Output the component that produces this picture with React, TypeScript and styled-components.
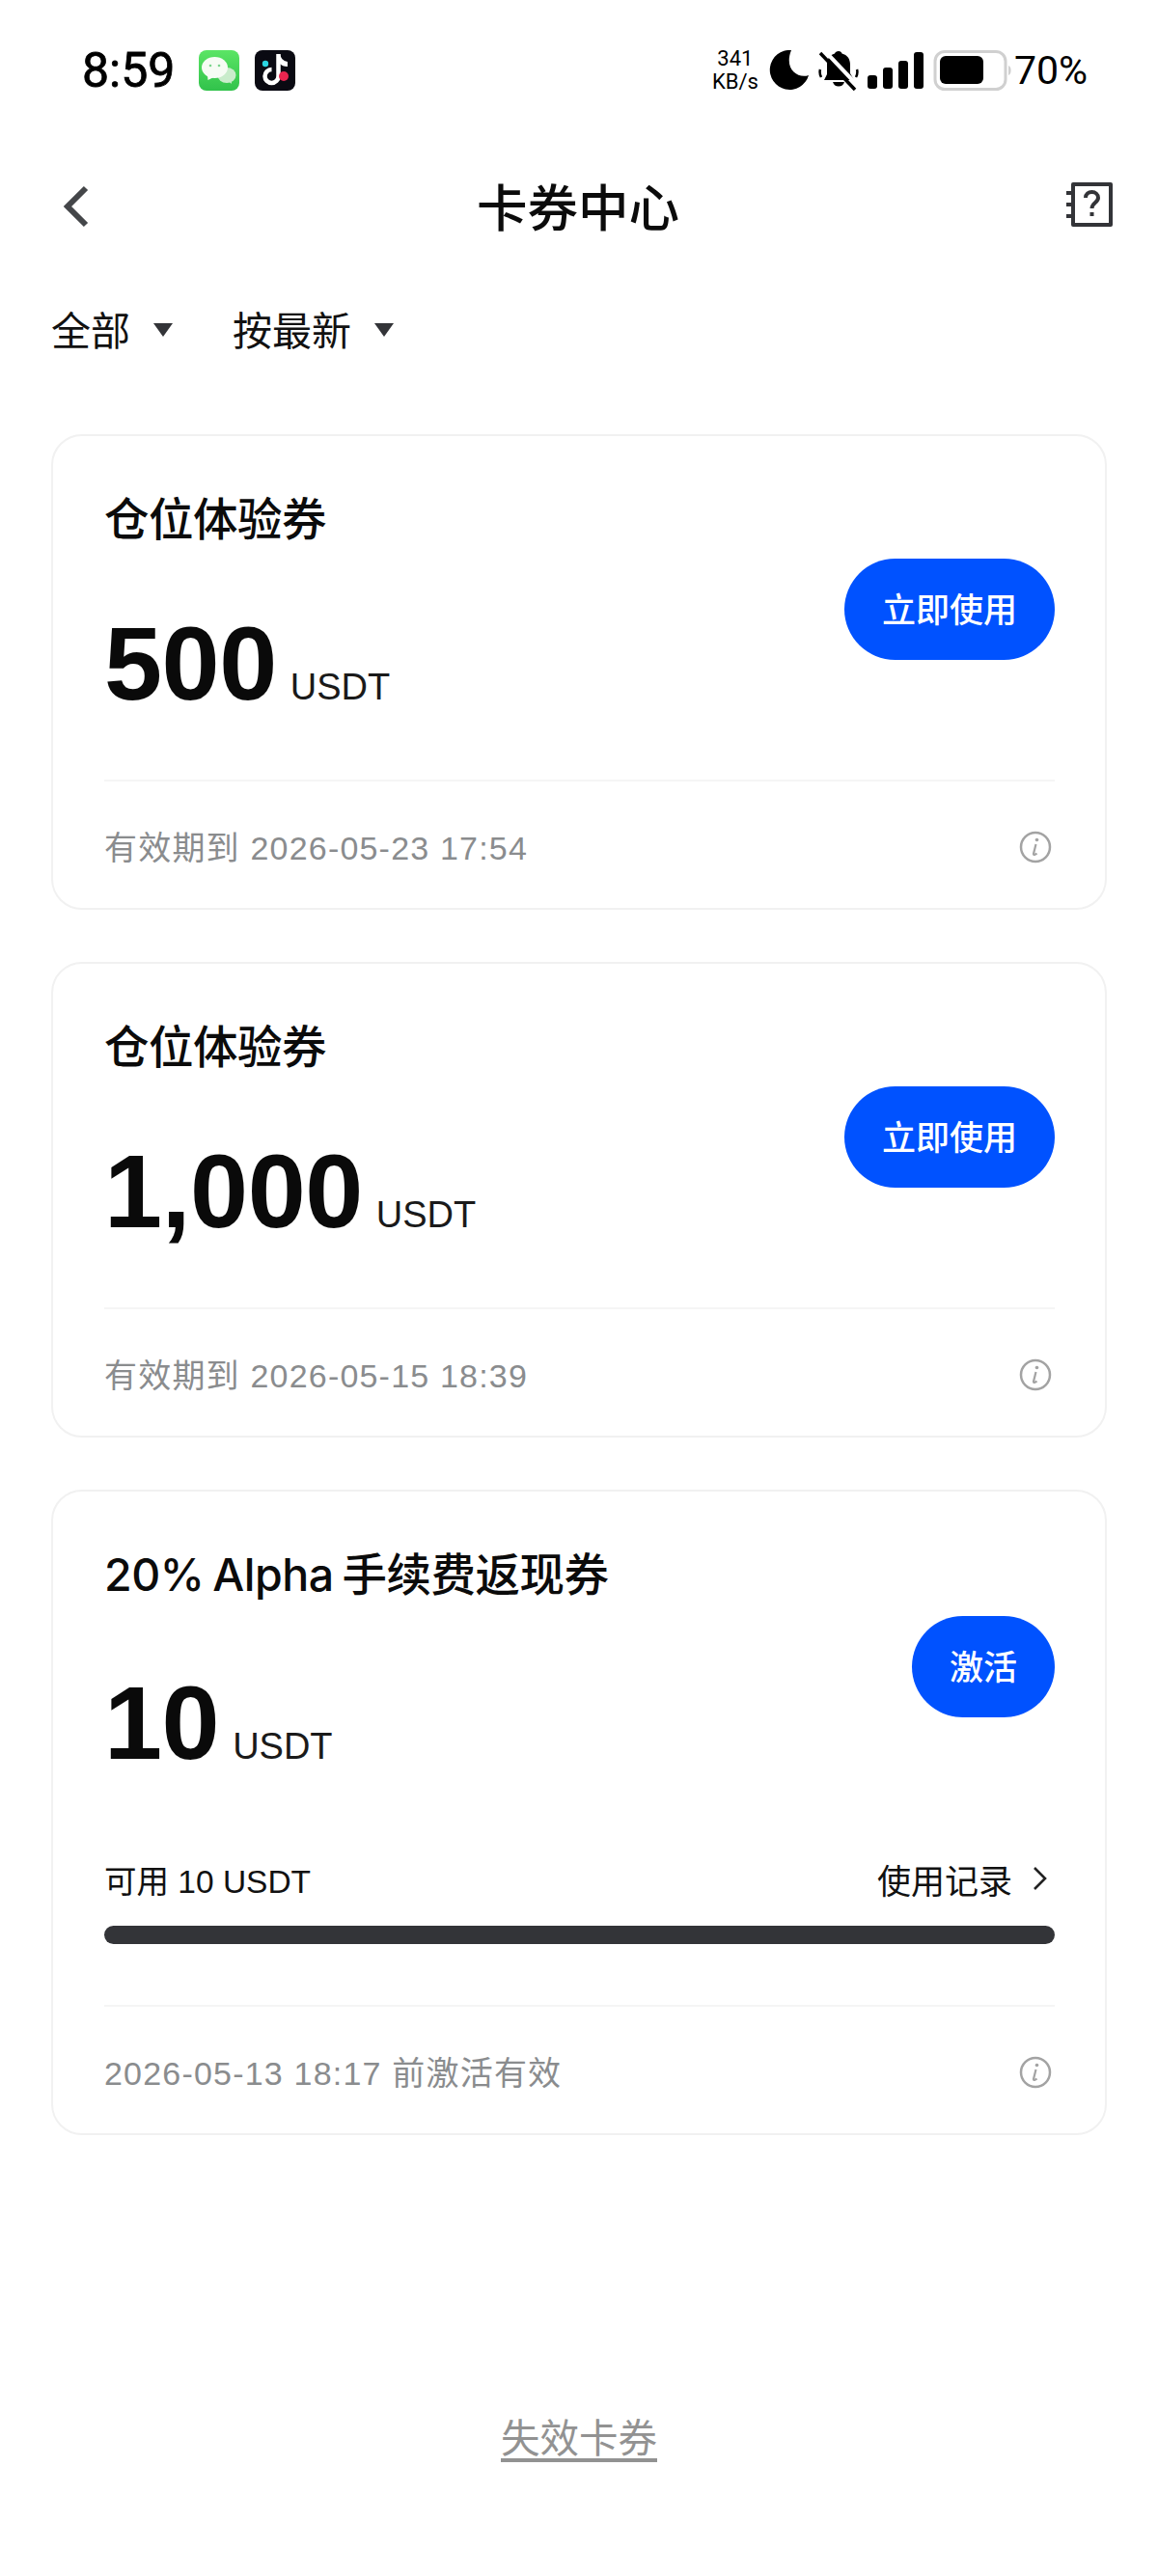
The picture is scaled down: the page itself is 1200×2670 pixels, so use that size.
import { createGlobalStyle, styled } from 'styled-components';

const GlobalStyle = createGlobalStyle`
  html, body {
    margin: 0;
    padding: 0;
    background: #fff;
  }
  body {
    font-family: "Liberation Sans", "Noto Sans CJK SC", sans-serif;
    color: #0b0b0b;
  }
`;

const vouchers = [
  { id: 1, title: '仓位体验券', amount: '500', action: '立即使用', expiry: '有效期到 2026-05-23 17:54' },
  { id: 2, title: '仓位体验券', amount: '1,000', action: '立即使用', expiry: '有效期到 2026-05-15 18:39' },
  {
    id: 3,
    title: '20% Alpha 手续费返现券',
    amount: '10',
    action: '激活',
    expiry: '2026-05-13 18:17 前激活有效',
    available: '可用 10 USDT',
  },
];

const WeChatIcon = () => (
  <svg width="42" height="42" viewBox="0 0 42 42">
    <defs>
      <linearGradient id="wechat-bg" x1="0" y1="0" x2="0" y2="1">
        <stop offset="0" stopColor="#5be565" />
        <stop offset="1" stopColor="#31c24b" />
      </linearGradient>
    </defs>
    <rect width="42" height="42" rx="8" fill="url(#wechat-bg)" />
    <ellipse cx="29" cy="26" rx="9.5" ry="8" fill="#c9eccb" />
    <path d="M31 32l3 3-.2-5z" fill="#c9eccb" />
    <ellipse cx="16.500" cy="18" rx="13.500" ry="11" fill="#f6fcf4" />
    <path d="M9 26l.5 5 6-3z" fill="#f6fcf4" />
    <circle cx="12" cy="16" r="1.300" fill="#7ad58c" />
    <circle cx="21" cy="16" r="1.300" fill="#7ad58c" />
  </svg>
);

const TikTokIcon = () => (
  <svg width="42" height="42" viewBox="0 0 42 42">
    <rect width="42" height="42" rx="8" fill="#0a0a12" />
    <path d="M24.500 4v23a7 7 0 1 1-7-7" fill="none" stroke="#fff" strokeWidth="4.500" />
    <path d="M26 4c1 4 3 7 8 8v5c-4 0-6-1-8-3z" fill="#fff" />
    <circle cx="11" cy="14" r="3.200" fill="#2ad4e0" />
    <circle cx="30" cy="27" r="5" fill="#e8254f" />
  </svg>
);

const MoonIcon = () => (
  <svg width="42" height="42" viewBox="0 0 42 42">
    <path d="M23 0A20.500 20.500 0 1 0 41 26C30 30 15 20 23 0z" fill="#000" />
  </svg>
);

const MutedBellIcon = () => (
  <svg width="42" height="42" viewBox="0 0 42 42">
    <path
      d="M21 1c2 0 3 1 3.500 2.500C30 5 33 9 33 15v9l4 7H6l3-6V15c0-6 3-10 8-11.500C17.500 2 19 1 21 1z"
      fill="#000"
    />
    <path d="M15 33h12c-1 3-3 4.500-6 4.500S16 36 15 33z" fill="#000" />
    <path d="M2 20c-1 3 0 6 1 8M40 20c1 3 0 6-1 8" stroke="#000" strokeWidth="2.500" fill="none" />
    <path d="M6 0l36 38" stroke="#fff" strokeWidth="4" />
    <path d="M2 3l36 38" stroke="#000" strokeWidth="3.500" />
  </svg>
);

const SignalIcon = () => (
  <svg width="59" height="40" viewBox="0 0 59 40">
    <rect x="0" y="25" width="10" height="14" rx="3" fill="#000" />
    <rect x="16" y="17" width="10" height="22" rx="3" fill="#000" />
    <rect x="32" y="10" width="10" height="29" rx="3" fill="#000" />
    <rect x="48" y="1" width="10" height="38" rx="3" fill="#000" />
  </svg>
);

const BatteryIcon = () => (
  <svg width="82" height="42" viewBox="0 0 82 42">
    <rect x="2" y="1.500" width="73" height="39" rx="10" fill="#fff" stroke="#d0d0d0" strokeWidth="3" />
    <rect x="7" y="6" width="45" height="29" rx="6" fill="#000" />
    <path d="M78 16c3.500 1 3.500 9 0 10z" fill="#d0d0d0" />
  </svg>
);

const BackIcon = () => (
  <svg width="30" height="44" viewBox="0 0 30 44">
    <path d="M25 3L6 22l19 19" fill="none" stroke="#444649" strokeWidth="6" />
  </svg>
);

const HelpBookIcon = () => (
  <svg width="50" height="50" viewBox="0 0 50 50">
    <path
      d="M8 4h39v42H8z"
      fill="none"
      stroke="#333438"
      strokeWidth="4"
      strokeLinejoin="round"
    />
    <path d="M1 13h8M1 25h8M1 37h8" stroke="#333438" strokeWidth="4" />
    <path
      d="M21 18c0-4 3-6 6.500-6s6.500 2.500 6.500 6c0 5-6.500 5-6.500 11"
      fill="none"
      stroke="#333438"
      strokeWidth="4"
    />
    <rect x="25.500" y="33" width="4" height="4" fill="#333438" />
  </svg>
);

const InfoIcon = () => (
  <svg width="34" height="34" viewBox="0 0 34 34">
    <circle cx="17" cy="17" r="15" fill="none" stroke="#a3a3a3" strokeWidth="2.500" />
    <circle cx="18.500" cy="9.500" r="1.800" fill="#a3a3a3" />
    <path d="M17.500 14l-2.500 10c0 1.500 2 1 3.500-.5" fill="none" stroke="#a3a3a3" strokeWidth="2.200" />
  </svg>
);

const ChevronRight = () => (
  <svg width="18" height="26" viewBox="0 0 18 26">
    <path d="M3 2l11 11L3 24" fill="none" stroke="#222" strokeWidth="2.600" />
  </svg>
);

const App = () => {
  return (
    <Page>
      <GlobalStyle />
      <StatusBar>
        <StatusLeft>
          <Clock>8:59</Clock>
          <WeChatIcon />
          <TikTokIcon />
        </StatusLeft>
        <StatusRight>
          <NetSpeed>
            <span>341</span>
            <span>KB/s</span>
          </NetSpeed>
          <MoonIcon />
          <MutedBellIcon />
          <SignalIcon />
          <BatteryIcon />
          <BatteryText>70%</BatteryText>
        </StatusRight>
      </StatusBar>

      <NavBar>
        <BackButton>
          <BackIcon />
        </BackButton>
        <NavTitle>卡券中心</NavTitle>
        <HelpBookIcon />
      </NavBar>

      <FilterBar>
        <Filter>
          全部
          <Caret />
        </Filter>
        <Filter>
          按最新
          <Caret />
        </Filter>
      </FilterBar>

      <CardList>
        {vouchers.map((voucher) => (
          <Card key={voucher.id}>
            <CardBody $withUsage={!!voucher.available}>
              <CardTop>
                <div>
                  <CardTitle>{voucher.title}</CardTitle>
                  <AmountRow $withUsage={!!voucher.available}>
                    <Amount>{voucher.amount}</Amount>
                    <Unit>USDT</Unit>
                  </AmountRow>
                </div>
                <ActionButton>{voucher.action}</ActionButton>
              </CardTop>
              {voucher.available && (
                <Usage>
                  <UsageRow>
                    <span>{voucher.available}</span>
                    <UsageLink>
                      使用记录
                      <ChevronRight />
                    </UsageLink>
                  </UsageRow>
                  <UsageBar />
                </Usage>
              )}
            </CardBody>
            <CardFooter>
              <ExpiryText>{voucher.expiry}</ExpiryText>
              <InfoIcon />
            </CardFooter>
          </Card>
        ))}
      </CardList>

      <ExpiredLink>失效卡券</ExpiredLink>
    </Page>
  );
};

const Page = styled.div`
  width: 1200px;
  min-height: 2670px;
  background: #fff;
  overflow: hidden;
`;

const StatusBar = styled.div`
  height: 146px;
  padding: 0 73px 0 85px;
  box-sizing: border-box;
  display: flex;
  align-items: center;
  justify-content: space-between;

  svg {
    display: block;
    flex: none;
  }
`;

const StatusLeft = styled.div`
  display: flex;
  align-items: center;
  gap: 16px;
`;

const Clock = styled.span`
  width: 105px;
  font-family: Roboto, sans-serif;
  font-size: 50px;
  font-weight: 400;
  color: #000;
  -webkit-text-stroke: 0.8px #000;
`;

const StatusRight = styled.div`
  display: flex;
  align-items: center;
  gap: 9px;
`;

const NetSpeed = styled.div`
  width: 48px;
  margin-right: 2px;
  display: flex;
  flex-direction: column;
  align-items: center;
  font-family: Roboto, sans-serif;
  font-size: 22px;
  line-height: 24px;
  color: #000;
`;

const BatteryText = styled.span`
  margin-left: -7px;
  font-family: Roboto, sans-serif;
  font-size: 41px;
  color: #000;
`;

const NavBar = styled.div`
  height: 136px;
  padding: 0 46px 4px 64px;
  box-sizing: border-box;
  display: flex;
  align-items: center;
  justify-content: space-between;
`;

const BackButton = styled.div`
  margin-top: 3px;
  line-height: 0;
`;

const NavTitle = styled.h1`
  margin: 0;
  font-family: "Noto Sans CJK SC", sans-serif;
  font-size: 52.5px;
  font-weight: 500;
  line-height: 70px;
  color: #0b0b0b;
`;

const FilterBar = styled.div`
  height: 116px;
  padding-left: 53px;
  display: flex;
  align-items: center;
  gap: 62px;
`;

const Filter = styled.div`
  display: flex;
  align-items: center;
  gap: 24px;
  font-family: "Noto Sans CJK SC", sans-serif;
  font-size: 41px;
  line-height: 60px;
  color: #111;
`;

const Caret = styled.span`
  width: 0;
  height: 0;
  margin-top: 3px;
  border-left: 10px solid transparent;
  border-right: 10px solid transparent;
  border-top: 14px solid #333438;
`;

const CardList = styled.div`
  margin-top: 52px;
  padding: 0 53px;
  display: flex;
  flex-direction: column;
  gap: 54px;
`;

const Card = styled.section`
  border: 2px solid #f1f1f1;
  border-radius: 32px;
  background: #fff;
`;

const CardBody = styled.div<{ $withUsage: boolean }>`
  padding: 56px 52px ${({ $withUsage }) => ($withUsage ? 63 : 66)}px 53px;
`;

const CardTop = styled.div`
  display: flex;
  align-items: center;
  justify-content: space-between;
`;

const CardTitle = styled.div`
  font-family: Inter, "Noto Sans CJK SC", sans-serif;
  font-size: 46.5px;
  font-weight: 500;
  line-height: 60px;
  letter-spacing: -0.5px;
  word-spacing: -3px;
`;

const AmountRow = styled.div<{ $withUsage: boolean }>`
  margin-top: ${({ $withUsage }) => ($withUsage ? 70 : 66)}px;
  display: flex;
  align-items: baseline;
  gap: 14px;
`;

const Amount = styled.span`
  font-size: 108px;
  font-weight: 700;
  line-height: 108px;
  letter-spacing: -0.5px;
  color: #0a0a0a;
`;

const Unit = styled.span`
  font-size: 38px;
  color: #1a1a1a;
`;

const ActionButton = styled.button`
  margin-top: 12px;
  height: 105px;
  padding: 0 39px 4px;
  border: 0;
  border-radius: 53px;
  background: #0052ff;
  color: #fff;
  font-family: "Noto Sans CJK SC", sans-serif;
  font-size: 35px;
  font-weight: 500;
`;

const Usage = styled.div`
  margin-top: 82px;
  display: flex;
  flex-direction: column;
  gap: 24px;
`;

const UsageRow = styled.div`
  height: 50px;
  display: flex;
  align-items: center;
  justify-content: space-between;
  font-size: 33.5px;
  color: #111;
`;

const UsageLink = styled.span`
  display: flex;
  align-items: center;
  gap: 20px;
  font-size: 35px;
  padding-right: 6px;
`;

const UsageBar = styled.div`
  height: 19px;
  border-radius: 10px;
  background: #333438;
`;

const CardFooter = styled.div`
  margin: 0 52px 0 53px;
  height: 133px;
  padding: 4px 3px 0 0;
  box-sizing: border-box;
  border-top: 2px solid #f5f5f5;
  display: flex;
  align-items: center;
  justify-content: space-between;
`;

const ExpiryText = styled.span`
  margin-bottom: 3px;
  font-size: 34px;
  letter-spacing: 1.2px;
  color: #8a8c8e;
`;

const ExpiredLink = styled.div`
  margin-top: 282px;
  text-align: center;
  font-family: "Noto Sans CJK SC", sans-serif;
  font-size: 40.5px;
  line-height: 60px;
  color: #929292;
  text-decoration: underline;
  text-underline-offset: 6px;
`;

export default App;
